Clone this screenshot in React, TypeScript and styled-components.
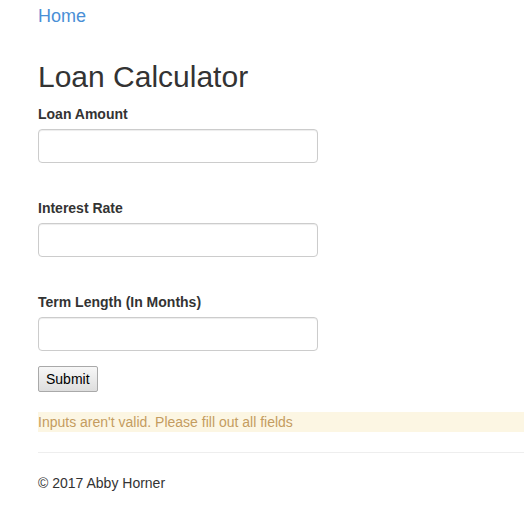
import React from "react";
import styled, { createGlobalStyle } from "styled-components";

const GlobalStyle = createGlobalStyle`
  html, body {
    margin: 0;
    padding: 0;
    background: #fff;
  }
  body {
    font-family: "Liberation Sans", Arial, Helvetica, sans-serif;
    font-size: 14px;
    line-height: 20px;
    color: #333;
  }
`;

const Page = styled.div`
  padding: 6px 0 0 38px;
`;

const NavLink = styled.a`
  display: inline-block;
  font-size: 18px;
  line-height: 20px;
  color: #4a8fd6;
  text-decoration: none;
`;

const Title = styled.h2`
  font-size: 30px;
  font-weight: 400;
  line-height: 33px;
  margin: 33px 0 11px;
  color: #333;
`;

const FormGroup = styled.div<{ $spaced?: boolean }>`
  margin-bottom: ${(p) => (p.$spaced ? 35 : 15)}px;
`;

const Label = styled.label`
  display: block;
  font-weight: 700;
  font-size: 14px;
  line-height: 20px;
  margin-bottom: 5px;
  color: #333;
`;

const Input = styled.input`
  display: block;
  box-sizing: border-box;
  width: 280px;
  height: 34px;
  padding: 6px 12px;
  font-size: 14px;
  border: 1px solid #ccc;
  border-radius: 4px;
  box-shadow: inset 0 1px 1px rgba(0, 0, 0, 0.075);
  background: #fff;
  outline: none;
`;

const SubmitButton = styled.button`
  display: block;
  font-family: "Liberation Sans", Arial, sans-serif;
  font-size: 14px;
  line-height: 18px;
  padding: 3px 7px;
  color: #000;
  border: 1px solid #a9a9a9;
  border-radius: 2px;
  background: linear-gradient(#f7f7f7, #dedede);
`;

const Warning = styled.div`
  margin-top: 20px;
  background: #fcf6e3;
  color: #c49c5f;
  font-size: 14px;
  line-height: 20px;
`;

const Rule = styled.hr`
  margin: 20px 0 20px;
  border: 0;
  border-top: 1px solid #eee;
`;

const Footer = styled.footer`
  font-size: 14px;
  line-height: 20px;
  color: #333;
`;

export default function App() {
  return (
    <>
      <GlobalStyle />
      <Page>
        <NavLink href="#">Home</NavLink>
        <Title>Loan Calculator</Title>
        <FormGroup $spaced>
          <Label>Loan Amount</Label>
          <Input type="text" />
        </FormGroup>
        <FormGroup $spaced>
          <Label>Interest Rate</Label>
          <Input type="text" />
        </FormGroup>
        <FormGroup>
          <Label>Term Length (In Months)</Label>
          <Input type="text" />
        </FormGroup>
        <SubmitButton type="button">Submit</SubmitButton>
        <Warning>Inputs aren't valid. Please fill out all fields</Warning>
        <Rule />
        <Footer>© 2017 Abby Horner</Footer>
      </Page>
    </>
  );
}
